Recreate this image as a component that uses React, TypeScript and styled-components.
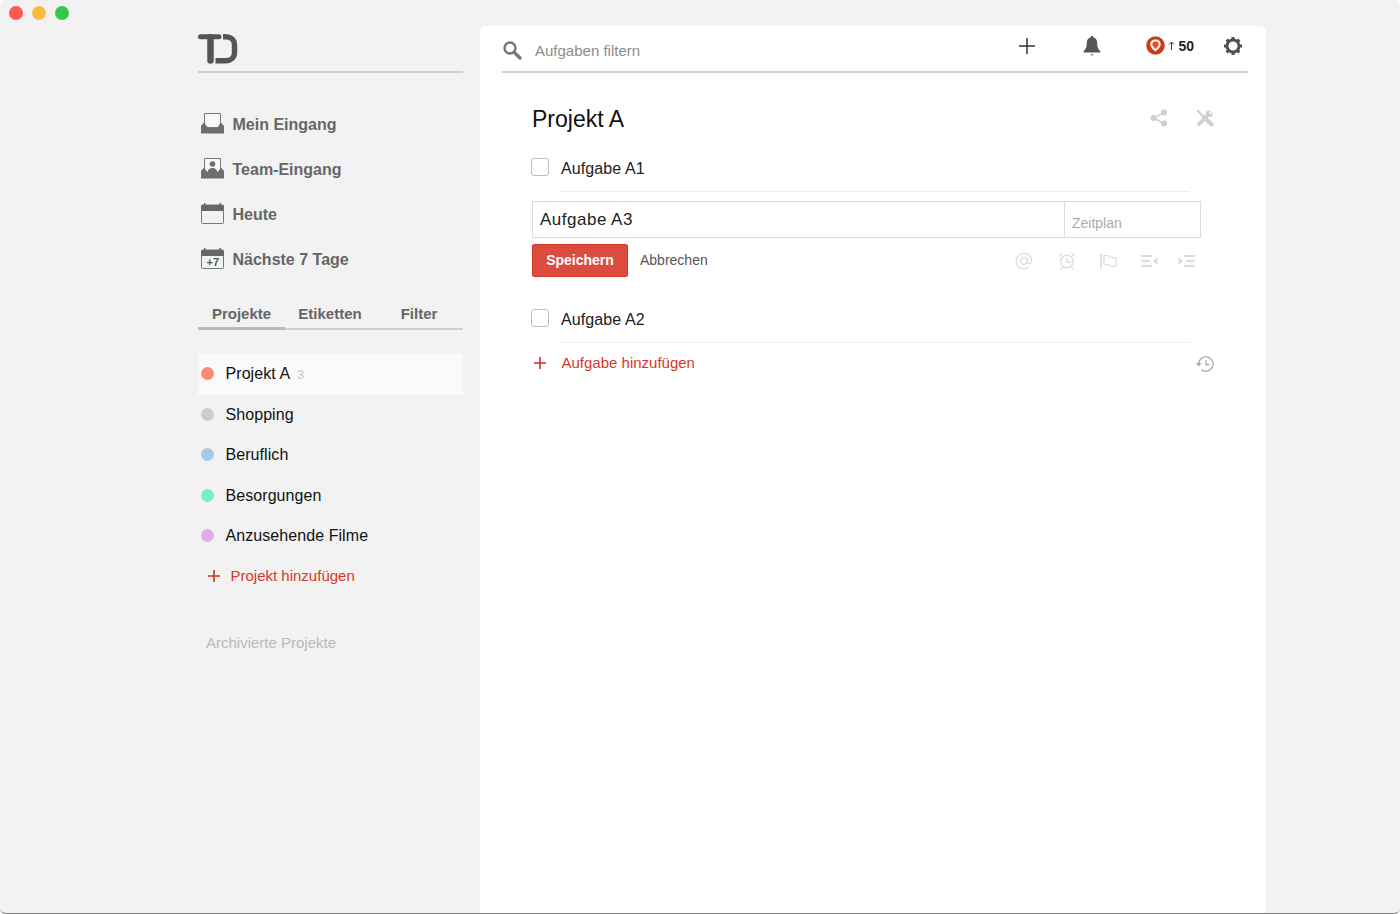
import React from "react";
import styled, { createGlobalStyle } from "styled-components";

const GlobalStyle = createGlobalStyle`
  html, body {
    margin: 0;
    padding: 0;
    background: #fff;
  }
  * {
    box-sizing: border-box;
  }
  body {
    font-family: "Liberation Sans", Arial, sans-serif;
  }
`;

const navItems = [
  { label: "Mein Eingang", icon: <InboxIcon /> },
  { label: "Team-Eingang", icon: <TeamIcon /> },
  { label: "Heute", icon: <TodayIcon /> },
  { label: "Nächste 7 Tage", icon: <WeekIcon /> },
];

const projects = [
  { name: "Projekt A", color: "#fb8a73", count: 3, selected: true },
  { name: "Shopping", color: "#cccccc" },
  { name: "Beruflich", color: "#a8c8e4" },
  { name: "Besorgungen", color: "#7ee8d2" },
  { name: "Anzusehende Filme", color: "#e0aee4" },
];

function Tray() {
  return <path d="M0 13L3 9.500L7 15H16L20 9.500L23 13V20.500H0Z" fill="#6e6e6e" />;
}

function InboxIcon() {
  return (
    <svg width="23" height="21" viewBox="0 0 23 21">
      <path d="M3.500 .5h16v14h-16z" fill="#f8f8f8" stroke="#777" strokeWidth="1" />
      <Tray />
    </svg>
  );
}

function TeamIcon() {
  return (
    <svg width="23" height="21" viewBox="0 0 23 21">
      <path d="M3.500 .5h16v14h-16z" fill="#f8f8f8" stroke="#777" strokeWidth="1" />
      <circle cx="11.500" cy="6" r="2.800" fill="#6e6e6e" />
      <path d="M6.500 15c0-3.500 2.500-5 5-5s5 1.500 5 5z" fill="#6e6e6e" />
      <Tray />
    </svg>
  );
}

function CalendarBase({ children }: { children?: React.ReactNode }) {
  return (
    <svg width="23" height="21" viewBox="0 0 23 21">
      <rect x=".5" y="2" width="22" height="18.500" rx="1" fill="none" stroke="#777" strokeWidth="1" />
      <path d="M.5 3c0-.6 .4-1 1-1h20c.6 0 1 .4 1 1V8H.5z" fill="#666" />
      <path d="M3 0h1.500v2.500H3zM18.500 0h1.500v2.500h-1.500z" fill="#666" />
      {children}
    </svg>
  );
}

function TodayIcon() {
  return <CalendarBase />;
}

function WeekIcon() {
  return (
    <CalendarBase>
      <text x="5.500" y="18.300" fontSize="11" fontFamily="Liberation Sans, sans-serif" fill="#555">
        +7
      </text>
    </CalendarBase>
  );
}

function Logo() {
  return (
    <svg width="42" height="30" viewBox="0 0 42 30">
      <path d="M2.500 2.800H21" stroke="#555" strokeWidth="5" strokeLinecap="round" fill="none" />
      <path d="M12.500 3v23.500" stroke="#555" strokeWidth="6.500" strokeLinecap="round" fill="none" />
      <path d="M25 2.700h2.500c5 0 9 3 9 8v8c0 5-4 8-9 8H17.500" stroke="#555" strokeWidth="5.400" fill="none" />
    </svg>
  );
}

function PlusIcon({ size = 12, color = "#d9281e", width = 1.6 }: { size?: number; color?: string; width?: number }) {
  return (
    <svg width={size} height={size} viewBox={`0 0 ${size} ${size}`}>
      <path d={`M${size / 2} 0v${size}M0 ${size / 2}h${size}`} stroke={color} strokeWidth={width} fill="none" />
    </svg>
  );
}

function SearchIcon() {
  return (
    <svg width="20" height="20" viewBox="0 0 20 20">
      <circle cx="8" cy="8" r="5.500" fill="none" stroke="#757575" strokeWidth="2.400" />
      <path d="M12.300 12.300l5.700 5.700" stroke="#757575" strokeWidth="3.200" strokeLinecap="round" />
    </svg>
  );
}

function BellIcon() {
  return (
    <svg width="18" height="20" viewBox="0 0 18 20">
      <path d="M9 0c1 0 1.500.7 1.500 1.400 2.700.7 3.700 3 3.700 5.800 0 3.800.8 5.600 3.300 8.300v1H.5v-1c2.500-2.700 3.300-4.500 3.300-8.300 0-2.800 1-5.100 3.700-5.800C7.500.7 8 0 9 0z" fill="#555" />
      <path d="M7.500 18h3v1.500h-3z" fill="#999" />
    </svg>
  );
}

function KarmaIcon() {
  return (
    <svg width="19" height="19" viewBox="0 0 19 19">
      <circle cx="9.500" cy="9.500" r="9.300" fill="#cc3d16" />
      <path d="M9.500 3.500c3.200 0 5.200 2 5.200 4.700 0 3-3 5.300-5.200 7.300-2.200-2-5.200-4.300-5.200-7.300 0-2.700 2-4.700 5.200-4.700z" fill="#fdf3ee" />
      <path d="M9.500 5.500c2 0 3.200 1.200 3.200 2.800 0 1.800-1.800 3.300-3.200 4.600-1.400-1.300-3.200-2.800-3.200-4.600 0-1.600 1.200-2.800 3.200-2.800z" fill="#dd5126" />
    </svg>
  );
}

function ArrowUpIcon() {
  return (
    <svg width="7" height="9" viewBox="0 0 7 9">
      <path d="M3.500 1v8M1 3.500L3.500 1L6 3.500" fill="none" stroke="#333" strokeWidth="1" />
    </svg>
  );
}

function GearIcon() {
  return (
    <svg width="20" height="20" viewBox="0 0 20 20">
      <circle cx="10" cy="10" r="6" fill="none" stroke="#4f4f4f" strokeWidth="2.800" />
      <path
        d="M10 1v3.500M10 15.500V19M1 10h3.500M15.500 10H19M3.600 3.600l2.500 2.500M13.900 13.900l2.500 2.500M16.400 3.600l-2.500 2.500M6.100 13.900l-2.500 2.500"
        stroke="#4f4f4f"
        strokeWidth="3"
        fill="none"
      />
    </svg>
  );
}

function ShareIcon() {
  return (
    <svg width="18" height="18" viewBox="0 0 18 18">
      <circle cx="3.500" cy="9" r="3" fill="#cfcfcf" />
      <circle cx="14" cy="3.500" r="3" fill="#cfcfcf" />
      <circle cx="14" cy="14.500" r="3" fill="#cfcfcf" />
      <path d="M3.500 9L14 3.500M3.500 9L14 14.500" stroke="#cfcfcf" strokeWidth="1.500" />
    </svg>
  );
}

function ToolsIcon() {
  return (
    <svg width="18" height="18" viewBox="0 0 18 18">
      <path d="M2 2l6 6" stroke="#cfcfcf" strokeWidth="2.200" strokeLinecap="round" />
      <path d="M8 8l7.500 7.500" stroke="#cfcfcf" strokeWidth="4" strokeLinecap="round" />
      <path d="M2.800 15.200L12 6" stroke="#cfcfcf" strokeWidth="3.600" strokeLinecap="round" />
      <circle cx="13.300" cy="4.700" r="3.400" fill="#cfcfcf" />
      <path d="M13.600 4.400L17 1" stroke="#fff" strokeWidth="2" />
    </svg>
  );
}

function AtIcon() {
  return (
    <svg width="18" height="18" viewBox="0 0 18 18">
      <circle cx="9" cy="9" r="3.300" fill="none" stroke="#dcdcdc" strokeWidth="1.300" />
      <path d="M12.300 6v4.300c0 2.200 4.500 2.200 4.500-1.300a7.800 7.800 0 1 0-3.200 6.300" fill="none" stroke="#dcdcdc" strokeWidth="1.300" />
    </svg>
  );
}

function AlarmIcon() {
  return (
    <svg width="18" height="18" viewBox="0 0 18 18">
      <circle cx="9" cy="9.500" r="6.300" fill="none" stroke="#dcdcdc" strokeWidth="1.300" />
      <path d="M9 5.500v4.500h3.500M1 4.500l3.500-3.500M17 4.500L13.500 1M4 15l-1.500 2.500M14 15l1.500 2.500" fill="none" stroke="#dcdcdc" strokeWidth="1.300" />
    </svg>
  );
}

function FlagIcon() {
  return (
    <svg width="17" height="14" viewBox="0 0 17 14">
      <path d="M1 0v14" stroke="#dcdcdc" strokeWidth="1.800" />
      <path d="M4 1.500h4l2 2h6v9h-5l-2-2H4z" fill="none" stroke="#dcdcdc" strokeWidth="1.200" />
    </svg>
  );
}

function OutdentIcon() {
  return (
    <svg width="17" height="12" viewBox="0 0 17 12">
      <path d="M0 1h11M0 6h9M0 11h11" stroke="#dcdcdc" strokeWidth="1.800" />
      <path d="M16.500 2v8l-5-4z" fill="#dcdcdc" />
    </svg>
  );
}

function IndentIcon() {
  return (
    <svg width="17" height="12" viewBox="0 0 17 12">
      <path d="M6 1h11M8 6h9M6 11h11" stroke="#dcdcdc" strokeWidth="1.800" />
      <path d="M.5 2v8l5-4z" fill="#dcdcdc" />
    </svg>
  );
}

function HistoryIcon() {
  return (
    <svg width="20" height="18" viewBox="0 0 20 18">
      <path d="M3.800 9a7.200 7.200 0 1 1 2.400 5.400" fill="none" stroke="#a9a9a9" strokeWidth="1.300" />
      <path d="M0.800 8h6l-3 3.500z" fill="#a9a9a9" />
      <path d="M11 5v4.500h3.500" fill="none" stroke="#a9a9a9" strokeWidth="1.300" />
    </svg>
  );
}

const App = () => {
  return (
    <>
      <GlobalStyle />
      <Page>
        <TitleBar>
          <Light color="#fc5753" />
          <Light color="#fdbc40" />
          <Light color="#34c84a" />
        </TitleBar>
        <Body>
          <Sidebar>
            <LogoBar>
              <Logo />
            </LogoBar>
            <NavList>
              {navItems.map((item) => (
                <NavItem key={item.label}>
                  <NavIcon>{item.icon}</NavIcon>
                  {item.label}
                </NavItem>
              ))}
            </NavList>
            <Tabs>
              <Tab active>Projekte</Tab>
              <Tab>Etiketten</Tab>
              <Tab>Filter</Tab>
            </Tabs>
            <ProjectList>
              {projects.map((project) => (
                <ProjectRow key={project.name} selected={project.selected}>
                  <Dot color={project.color} />
                  {project.name}
                  {project.count && <Count>{project.count}</Count>}
                </ProjectRow>
              ))}
            </ProjectList>
            <AddProject>
              <PlusIcon />
              Projekt hinzufügen
            </AddProject>
            <Archived>Archivierte Projekte</Archived>
          </Sidebar>
          <Main>
            <TopBar>
              <SearchBox>
                <SearchIcon />
                Aufgaben filtern
              </SearchBox>
              <TopActions>
                <TopPlus>
                  <PlusIcon size={16} color="#333" width={1.5} />
                </TopPlus>
                <BellWrap>
                  <BellIcon />
                </BellWrap>
                <Karma>
                  <KarmaIcon />
                  <ArrowUpIcon />
                  <KarmaValue>50</KarmaValue>
                </Karma>
                <GearIcon />
              </TopActions>
            </TopBar>
            <Content>
              <TitleRow>
                <Title>Projekt A</Title>
                <TitleIcons>
                  <ShareIcon />
                  <ToolsIcon />
                </TitleIcons>
              </TitleRow>
              <Task>
                <Check />
                <TaskText>Aufgabe A1</TaskText>
              </Task>
              <Editor>
                <EditorInput>
                  <EditorText>Aufgabe A3</EditorText>
                  <EditorDate>Zeitplan</EditorDate>
                </EditorInput>
                <EditorActions>
                  <SaveButton>Speichern</SaveButton>
                  <CancelText>Abbrechen</CancelText>
                  <EditorIcons>
                    <AtIcon />
                    <AlarmIcon />
                    <FlagIcon />
                    <OutdentIcon />
                    <IndentIcon />
                  </EditorIcons>
                </EditorActions>
              </Editor>
              <Task>
                <Check />
                <TaskText>Aufgabe A2</TaskText>
              </Task>
              <AddTaskRow>
                <AddTask>
                  <PlusIcon />
                  Aufgabe hinzufügen
                </AddTask>
                <HistoryWrap>
                  <HistoryIcon />
                </HistoryWrap>
              </AddTaskRow>
            </Content>
          </Main>
        </Body>
      </Page>
    </>
  );
};

export default App;

const Page = styled.div`
  width: 1400px;
  height: 914px;
  overflow: hidden;
  display: flex;
  flex-direction: column;
  background: #f2f2f2;
  border-bottom: 1px solid #7a7a7a;
  border-radius: 5px 5px 6px 6px;
`;

const TitleBar = styled.div`
  height: 26px;
  flex: none;
  display: flex;
  gap: 9px;
  padding: 6px 0 0 9px;
`;

const Light = styled.span<{ color: string }>`
  width: 14px;
  height: 14px;
  border-radius: 50%;
  background: ${(p) => p.color};
`;

const Body = styled.div`
  flex: 1;
  display: flex;
  padding-left: 198px;
  gap: 17px;
  min-height: 0;
`;

const Sidebar = styled.aside`
  width: 265px;
  flex: none;
`;

const LogoBar = styled.div`
  height: 47px;
  padding-top: 8px;
  border-bottom: 2px solid #cfcfcf;
`;

const NavList = styled.nav`
  margin-top: 29px;
  display: flex;
  flex-direction: column;
`;

const NavItem = styled.div`
  height: 45px;
  display: flex;
  align-items: center;
  gap: 7.5px;
  padding-left: 3px;
  font-size: 16px;
  font-weight: 700;
  color: #666;
`;

const NavIcon = styled.span`
  display: flex;
  width: 24px;
  margin-top: -3px;
`;

const Tabs = styled.div`
  margin-top: 12px;
  height: 36px;
  display: grid;
  grid-template-columns: 87px 90px 88px;
  border-bottom: 2px solid #cfcfcf;
`;

const Tab = styled.div<{ active?: boolean }>`
  display: flex;
  align-items: center;
  justify-content: center;
  margin-bottom: -2px;
  padding-top: 6px;
  border-bottom: 3px solid ${(p) => (p.active ? "#b9b9b9" : "transparent")};
  font-size: 15px;
  font-weight: 700;
  color: #666;
`;

const ProjectList = styled.ul`
  list-style: none;
  margin: 24px 0 0;
  padding: 0;
`;

const ProjectRow = styled.li<{ selected?: boolean }>`
  height: 40.5px;
  display: flex;
  align-items: center;
  padding-left: 2.5px;
  font-size: 16px;
  letter-spacing: 0.07px;
  color: #111;
  background: ${(p) => (p.selected ? "#fafafa" : "transparent")};
`;

const Dot = styled.span<{ color: string }>`
  width: 13px;
  height: 13px;
  margin-right: 12px;
  margin-top: -1px;
  border-radius: 50%;
  background: ${(p) => p.color};
`;

const Count = styled.span`
  margin-left: 7px;
  margin-top: 1px;
  font-size: 12px;
  color: #c4c4c4;
`;

const AddProject = styled.div`
  height: 38px;
  display: flex;
  align-items: center;
  gap: 11px;
  padding-left: 9.5px;
  font-size: 15px;
  color: #d9362b;
`;

const Archived = styled.div`
  margin-top: 39px;
  padding-left: 8px;
  font-size: 15px;
  color: #b9b9b9;
`;

const Main = styled.main`
  width: 786px;
  flex: none;
  background: #fff;
  border-radius: 6px 6px 0 0;
  padding: 0 18px 0 22px;
`;

const TopBar = styled.div`
  height: 47px;
  display: flex;
  align-items: center;
  justify-content: space-between;
  border-bottom: 2px solid #cfcfcf;
`;

const SearchBox = styled.div`
  display: flex;
  align-items: center;
  gap: 13px;
  padding-top: 3px;
  font-size: 15px;
  color: #8c8c8c;
`;

const TopActions = styled.div`
  display: flex;
  align-items: center;
  padding: 0 5px 6px 0;
`;

const TopPlus = styled.span`
  display: flex;
  margin-right: 48px;
`;

const BellWrap = styled.span`
  display: flex;
  margin-right: 45px;
`;

const Karma = styled.div`
  display: flex;
  align-items: center;
  gap: 3px;
  margin-right: 29px;
`;

const KarmaValue = styled.span`
  font-size: 14px;
  font-weight: 700;
  color: #222;
`;

const Content = styled.section`
  padding: 0 58px 0 30px;
`;

const TitleRow = styled.div`
  height: 72px;
  padding-top: 20px;
  display: flex;
  align-items: center;
  justify-content: space-between;
`;

const Title = styled.h1`
  margin: 0;
  font-size: 23px;
  font-weight: 400;
  color: #111;
`;

const TitleIcons = styled.div`
  display: flex;
  gap: 28px;
  margin: -2px -24px 0 0;
`;

const Task = styled.div`
  height: 47px;
  display: flex;
  align-items: center;
`;

const Check = styled.span`
  width: 18px;
  height: 18px;
  flex: none;
  margin: -3px 0 0 -1px;
  border: 1px solid #bdbdbd;
  border-radius: 3px;
  background: #fff;
`;

const TaskText = styled.div`
  flex: 1;
  align-self: stretch;
  display: flex;
  align-items: center;
  margin-left: 12px;
  padding-top: 1px;
  border-bottom: 1px solid #ececec;
  font-size: 16px;
  letter-spacing: 0.1px;
  color: #222;
`;

const Editor = styled.div`
  margin: 9px -11px 19px 0;
`;

const EditorInput = styled.div`
  height: 37px;
  display: flex;
  border: 1px solid #dcdcdc;
`;

const EditorText = styled.div`
  flex: 1;
  display: flex;
  align-items: center;
  padding-left: 7px;
  font-size: 17px;
  letter-spacing: 0.5px;
  color: #222;
`;

const EditorDate = styled.div`
  width: 136px;
  display: flex;
  align-items: center;
  padding: 6px 0 0 7px;
  border-left: 1px solid #dcdcdc;
  font-size: 14px;
  color: #aaa;
`;

const EditorActions = styled.div`
  margin-top: 6px;
  display: flex;
  align-items: center;
`;

const SaveButton = styled.button`
  width: 96px;
  height: 33px;
  padding: 0 0 2px;
  border: 1px solid #d9362b;
  border-radius: 2px;
  background: #db4c3f;
  font-family: inherit;
  font-size: 14px;
  font-weight: 700;
  color: #fff;
`;

const CancelText = styled.span`
  margin: -2px 0 0 12px;
  font-size: 14px;
  color: #555;
`;

const EditorIcons = styled.div`
  margin: 0 6.5px 0 auto;
  display: grid;
  grid-template-columns: 43px 42px 40.5px 37px 17px;
  align-items: center;
`;

const AddTaskRow = styled.div`
  height: 39px;
  margin-right: -25px;
  display: flex;
  align-items: center;
  justify-content: space-between;
`;

const AddTask = styled.div`
  display: flex;
  align-items: center;
  gap: 16px;
  padding-left: 1.5px;
  font-size: 15px;
  color: #d9362b;
`;

const HistoryWrap = styled.span`
  display: flex;
  margin-top: 3px;
`;
